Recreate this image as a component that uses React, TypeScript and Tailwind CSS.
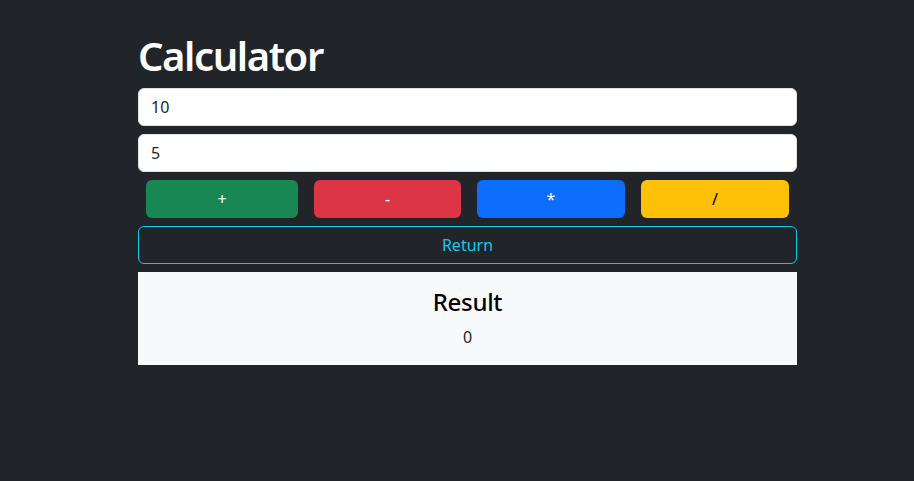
import React, { useState } from 'react';

const ops = [
  { label: '+', cls: 'w-[152px] bg-[#198754] text-white' },
  { label: '-', cls: 'w-[147px] bg-[#dc3545] text-white' },
  { label: '*', cls: 'w-[148px] bg-[#0d6efd] text-white' },
  { label: '/', cls: 'w-[148px] bg-[#ffc107] text-black' },
];

export default function App() {
  const [a, setA] = useState('10');
  const [b, setB] = useState('5');
  const [result, setResult] = useState(0);

  const calc = (op: string) => {
    const x = parseFloat(a) || 0;
    const y = parseFloat(b) || 0;
    if (op === '+') setResult(x + y);
    if (op === '-') setResult(x - y);
    if (op === '*') setResult(x * y);
    if (op === '/') setResult(y === 0 ? 0 : x / y);
  };

  return (
    <div className="min-h-[481px] bg-[#212529] font-['Noto_Sans',sans-serif] text-[#dee2e6]">
      <div className="ml-[138px] w-[659px] pt-8">
        <h1 className="mb-2 text-[40px] font-semibold leading-[1.2] tracking-[-1.4px] text-white">Calculator</h1>
        <input
          value={a}
          onChange={(e) => setA(e.target.value)}
          className="mb-2 block h-[38px] w-full rounded-md border border-[#dee2e6] bg-white px-3 text-base text-[#212529] outline-none"
        />
        <input
          value={b}
          onChange={(e) => setB(e.target.value)}
          className="mb-2 block h-[38px] w-full rounded-md border border-[#dee2e6] bg-white px-3 text-base text-[#212529] outline-none"
        />
        <div className="mb-2 flex gap-4 px-2">
          {ops.map((o) => (
            <button
              key={o.label}
              onClick={() => calc(o.label)}
              className={`h-[38px] rounded-md text-base ${o.cls}`}
            >
              {o.label}
            </button>
          ))}
        </div>
        <button
          onClick={() => setResult(0)}
          className="mb-2 block h-[38px] w-full rounded-md border border-[#0dcaf0] text-base text-[#0dcaf0]"
        >
          Return
        </button>
        <div className="bg-[#f8f9fa] p-4 text-center">
          <h4 className="mb-2 text-2xl font-medium leading-[1.2] tracking-[-0.3px] text-black">Result</h4>
          <p className="text-base leading-6 text-[#212529]">{result}</p>
        </div>
      </div>
    </div>
  );
}
